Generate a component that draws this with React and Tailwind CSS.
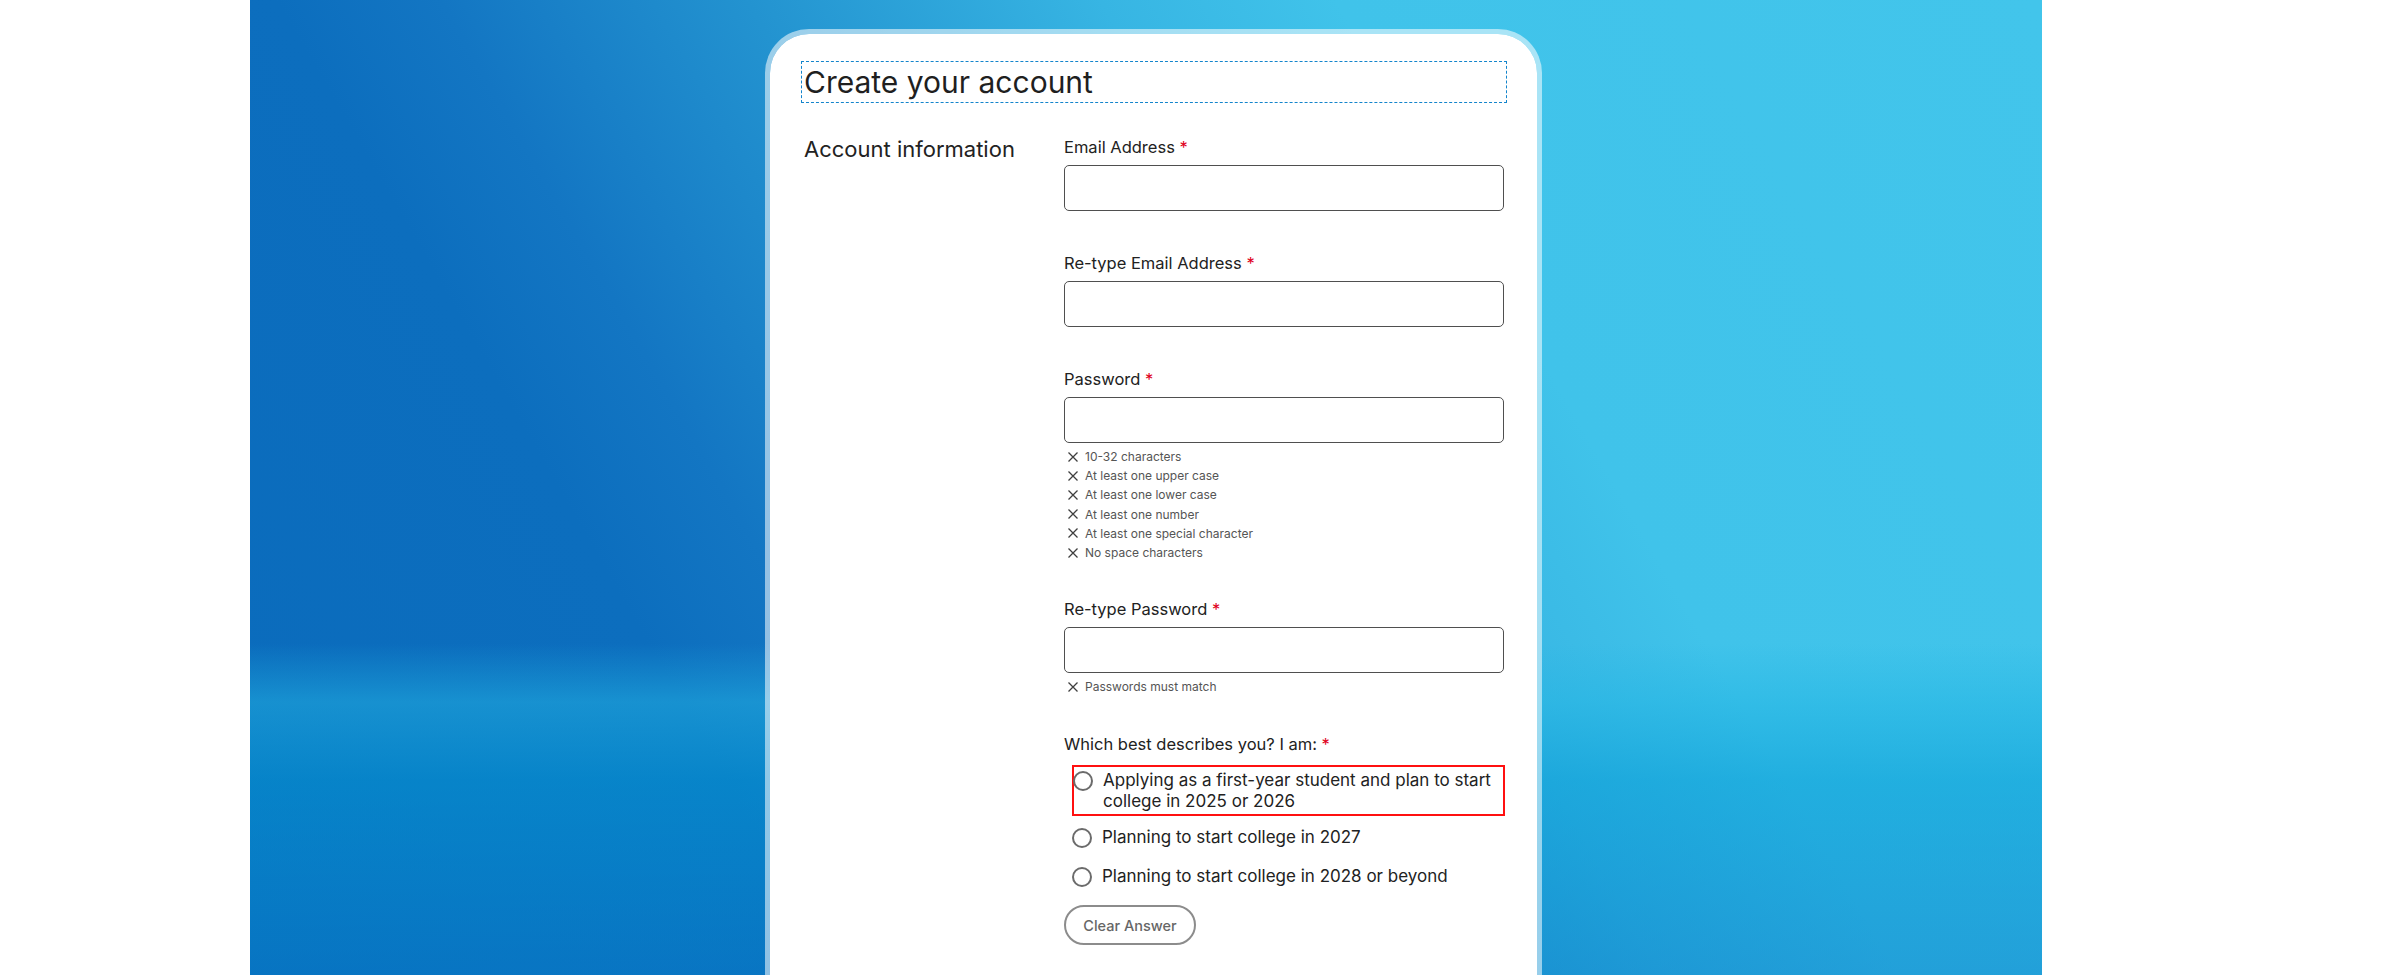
import React from "react";

const requirements = [
  "10-32 characters",
  "At least one upper case",
  "At least one lower case",
  "At least one number",
  "At least one special character",
  "No space characters",
];

const options = [
  "Applying as a first-year student and plan to start college in 2025 or 2026",
  "Planning to start college in 2027",
  "Planning to start college in 2028 or beyond",
];

function Cross() {
  return (
    <svg viewBox="0 0 12 12" className="ml-[3px] mr-[6px] h-3 w-3 shrink-0">
      <path d="M1.5 1.5l9 9M10.5 1.5l-9 9" stroke="#3f3f3f" strokeWidth="1.3" fill="none" />
    </svg>
  );
}

function Hints({ items }) {
  return (
    <ul className="mt-1 text-[12px] leading-[19.2px] text-[#555]">
      {items.map((t) => (
        <li key={t} className="flex items-center">
          <Cross />
          {t}
        </li>
      ))}
    </ul>
  );
}

function Field({ label, type = "text", hints, className = "mb-[40px]" }) {
  return (
    <div className={className}>
      <label className="mb-[6px] block text-[16.5px] leading-6 text-[#222]">
        {label} <span className="text-[#e0001b]">*</span>
      </label>
      <input
        type={type}
        className="block h-[46px] w-full rounded-[5px] border border-[#4f4f4f] bg-white px-3 outline-none"
      />
      {hints && <Hints items={hints} />}
    </div>
  );
}

function Radio({ text, index }) {
  const first = index === 0;
  return (
    <label
      className={
        first
          ? "ml-[8px] flex w-[433px] items-start border-2 border-[#ff1010] pb-[2px] pt-[3px]"
          : `ml-[8px] flex h-[39px] items-center ${index === 1 ? "mt-[2px]" : ""}`
      }
    >
      <span
        className={`h-5 w-5 shrink-0 rounded-full border-2 border-[#6b6b6b] ${first ? "-ml-[1px] mt-[0.5px]" : ""}`}
      />
      <span className="ml-[10px] pr-[10px] text-[17px] leading-[21px] text-[#222]">{text}</span>
    </label>
  );
}

export default function App() {
  return (
    <div className="h-[975px] overflow-hidden bg-white font-['Inter',sans-serif]">
      <div className="ml-[250px] h-full w-[1792px] bg-[linear-gradient(to_bottom,transparent_66%,rgba(35,181,227,0.5)_72%,rgba(3,155,213,0.5)_80%,rgba(5,125,200,0.5)_100%),linear-gradient(60deg,#0a6bbc_0%,#0c6ebe_25%,#1376c3_32%,#2393d0_45%,#37b5e3_60%,#40c3ea_70%,#42c5eb_100%)] pt-[29px]">
        <div className="ml-[515px] min-h-[1000px] w-[777px] rounded-t-[44px] border-[5px] border-b-0 border-[rgba(255,255,255,0.55)] bg-white bg-clip-padding pb-10 pl-[31px] pr-[30px] pt-[27px]">
          <div className="h-[42px] border border-dashed border-[#1485cc] pl-[2px]">
            <h1 className="text-[30px] font-normal leading-[40px] text-[#1f1f1f]">
              Create your account
            </h1>
          </div>

          <div className="mt-[32px] flex">
            <div className="w-[263px] pl-[3px] text-[22px] leading-[28px] text-[#222]">
              Account information
            </div>

            <div className="w-[440px]">
              <Field label="Email Address" type="email" />
              <Field label="Re-type Email Address" type="email" />
              <Field label="Password" type="password" hints={requirements} className="mb-[35px]" />
              <Field
                label="Re-type Password"
                type="password"
                hints={["Passwords must match"]}
                className="mb-[36px]"
              />

              <div className="text-[16.5px] leading-6 text-[#222]">
                Which best describes you? I am: <span className="text-[#e0001b]">*</span>
              </div>
              <div className="mt-[9px]">
                {options.map((o, i) => (
                  <Radio key={o} text={o} index={i} />
                ))}
              </div>
              <button className="mt-[9px] h-[40px] w-[132px] rounded-full border-2 border-[#8c8c8c] text-[14.5px] font-medium text-[#666]">
                Clear Answer
              </button>
            </div>
          </div>
        </div>
      </div>
    </div>
  );
}
